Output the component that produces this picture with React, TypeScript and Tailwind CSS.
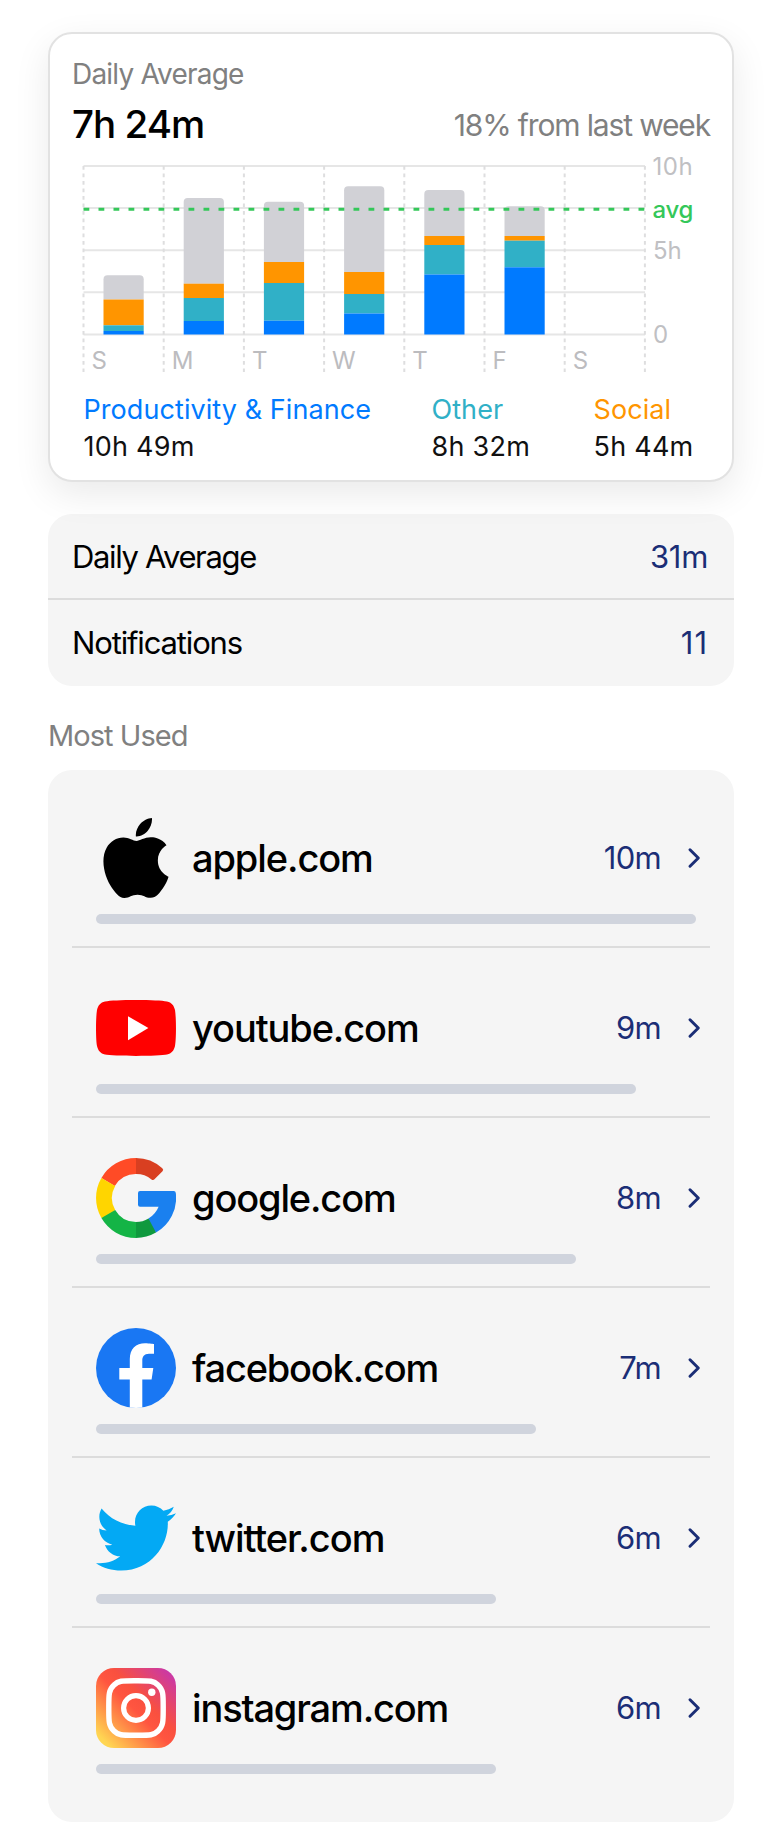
import React from "react";
import { SiApple } from "react-icons/si";

type Day = { label: string; top: number; social: number; other: number; work: number };

const BASE = 334.5;
const LEFT = 83.5;
const STEP = 80.2;

const days: Day[] = [
  { label: "S", top: 275.3, social: 299.5, other: 325.3, work: 331 },
  { label: "M", top: 198, social: 283.7, other: 298, work: 321 },
  { label: "T", top: 201.7, social: 262, other: 283, work: 320.7 },
  { label: "W", top: 186.3, social: 272, other: 294, work: 313.5 },
  { label: "T", top: 190, social: 236, other: 245, work: 274.5 },
  { label: "F", top: 206.3, social: 236, other: 240.7, work: 267.3 },
  { label: "S", top: BASE, social: BASE, other: BASE, work: BASE },
];

function UsageChart() {
  return (
    <svg className="block h-[224px] w-[638px] overflow-visible" viewBox="72 154 638 224" fontFamily="Inter, sans-serif" fontSize="24">
      {[166, 208, 250.2, 292.3, 334.5].map((y) => (
        <line key={y} x1={LEFT} x2={645} y1={y} y2={y} stroke="#e6e6e6" strokeWidth="2" />
      ))}
      {Array.from({ length: 8 }, (_, i) => (
        <line key={i} x1={LEFT + STEP * i} x2={LEFT + STEP * i} y1="166" y2="372" stroke="#dededf" strokeWidth="2" strokeDasharray="3.7 3.8" />
      ))}
      {days.map((d, i) => {
        const x = LEFT + STEP * i + 20;
        if (d.top >= BASE) return null;
        return (
          <g key={i}>
            <path d={`M${x} ${d.social}V${d.top + 4}q0 -4 4 -4h32.2q4 0 4 4V${d.social}z`} fill="#d1d1d6" />
            <rect x={x} y={d.social} width="40.2" height={d.other - d.social} fill="#ff9500" />
            <rect x={x} y={d.other} width="40.2" height={d.work - d.other} fill="#30b0c7" />
            <rect x={x} y={d.work} width="40.2" height={BASE - d.work} fill="#007aff" />
          </g>
        );
      })}
      <line x1={LEFT} x2="645" y1="209.3" y2="209.3" stroke="#34c759" strokeWidth="3" strokeDasharray="5.8 9.2" />
      {days.map((d, i) => (
        <text key={i} x={LEFT + STEP * i + 8} y="368.5" fill="#bcbcbf">{d.label}</text>
      ))}
      <text x="652.5" y="174.8" letterSpacing="0.5" fill="#c0c0c3">10h</text>
      <text x="652.5" y="218" fontWeight="500" letterSpacing="-0.3" fill="#34c759">avg</text>
      <text x="653" y="258.8" fill="#c0c0c3">5h</text>
      <text x="653" y="343" fill="#c0c0c3">0</text>
    </svg>
  );
}

function YouTube() {
  return (
    <svg className="size-20" viewBox="0 0 80 80">
      <path d="M40 12C55 12 66 12.5 71 13.5C75.500 14.500 78 17.500 79 22C80.300 30 80.300 50 79 58C78 62.500 75.500 65.500 71 66.600C64 68.400 16 68.400 9 66.600C4.500 65.500 2 62.500 1 58C-.3 50 -.3 30 1 22C2 17.500 4.500 14.500 9 13.500C14 12.500 25 12 40 12Z" fill="#f00" />
      <path d="M32 28.200L52.400 40L32 52.200Z" fill="#fff" />
    </svg>
  );
}

function Google() {
  return (
    <svg className="size-20" viewBox="0 0 80 80">
      <path d="M40 0A40 40 0 0 0 5.400 20L18.800 28A24 24 0 0 1 40 16L43 8Z" fill="#ff4b26" />
      <path d="M40 0V16A24 24 0 0 1 55.500 21.400Q57.300 22.700 58.700 21L66.500 13.300Q68 11.700 66.300 10.200A40 40 0 0 0 40 0Z" fill="#d93f21" />
      <path d="M5.400 20A40 40 0 0 0 5.400 60L13 58L19.200 52A24 24 0 0 1 19.200 28Z" fill="#ffd500" />
      <path d="M5.400 60A40 40 0 0 0 40 80L43 72L40 64A24 24 0 0 1 19.200 52Z" fill="#14b446" />
      <path d="M40 64V80A40 40 0 0 0 60 74.600L59 67L52.500 60.500A24 24 0 0 1 40 64Z" fill="#0f993e" />
      <path d="M44 33H77.800Q79.600 33 79.800 35A40 40 0 0 1 60 74.600L52.500 60.500A24 24 0 0 0 62.600 48.800H44Q42 48.800 42 46.800V35Q42 33 44 33Z" fill="#1a80ef" />
    </svg>
  );
}

function Facebook() {
  return (
    <svg className="size-20" viewBox="0 0 80 80">
      <circle cx="40" cy="40" r="40" fill="#1977f3" />
      <path d="M33.800 79.500V51.500H23.300V40H33.800V31C33.800 20.600 40 15.200 49 15.200C53.500 15.200 58 16 58 16V25.800H53C48 25.800 46.300 29 46.300 32.400V40H57.300L55.600 51.500H46.300V79.500Q40 80.300 33.800 79.500Z" fill="#fff" />
    </svg>
  );
}

function Twitter() {
  return (
    <svg className="size-20" viewBox="0 0 512 512">
      <path fill="#03a9f4" d="M512 97.248c-19.04 8.352-39.328 13.888-60.48 16.576 21.76-12.992 38.368-33.408 46.176-58.016-20.288 12.096-42.688 20.64-66.56 25.408C411.872 60.704 384.416 48 354.464 48c-58.112 0-104.896 47.168-104.896 104.992 0 8.320.704 16.320 2.432 23.936-87.264-4.256-164.480-46.080-216.352-109.792-9.056 15.712-14.368 33.696-14.368 53.056 0 36.352 18.720 68.576 46.624 87.232-16.864-.32-33.408-5.216-47.424-12.928v1.152c0 51.008 36.384 93.376 84.096 103.136-8.544 2.336-17.856 3.456-27.520 3.456-6.720 0-13.504-.384-19.872-1.792 13.600 41.568 52.192 72.128 98.080 73.120-35.712 27.936-81.056 44.768-130.144 44.768-8.608 0-16.864-.384-25.120-1.440C46.496 446.880 101.600 464 161.024 464c193.152 0 298.752-160 298.752-298.688 0-4.640-.16-9.120-.384-13.568 20.832-14.784 38.336-33.248 52.608-54.496z" />
    </svg>
  );
}

function Instagram() {
  return (
    <svg className="size-20" viewBox="0 0 80 80">
      <defs>
        <linearGradient id="ig" x1="0" y1="80" x2="80" y2="0" gradientUnits="userSpaceOnUse">
          <stop offset="0" stopColor="#ffdd55" />
          <stop offset="0.1" stopColor="#ffd452" />
          <stop offset="0.48" stopColor="#ff5540" />
          <stop offset="0.6" stopColor="#f9503f" />
          <stop offset="0.95" stopColor="#c837ab" />
        </linearGradient>
      </defs>
      <rect width="80" height="80" rx="18" fill="url(#ig)" />
      <path d="M40 12.700C54 12.700 57.500 12.500 62 17C67.500 22 67.200 27 67.200 40C67.200 53 67.500 58 62 63C57.500 67.500 54 67.300 40 67.300C26 67.300 22.500 67.500 18 63C12.500 58 12.800 53 12.800 40C12.800 27 12.500 22 18 17C22.500 12.500 26 12.700 40 12.700Z" fill="none" stroke="#fff" strokeWidth="5.400" />
      <circle cx="40" cy="40" r="12.400" fill="none" stroke="#fff" strokeWidth="5.200" />
      <circle cx="55.800" cy="24.200" r="3.700" fill="#fff" />
    </svg>
  );
}

const sites = [
  { name: "apple.com", time: "10m", width: 600, track: "tracking-[-1.1px]", icon: <SiApple className="size-20 text-black" /> },
  { name: "youtube.com", time: "9m", width: 540, track: "tracking-[-1.1px]", icon: <YouTube /> },
  { name: "google.com", time: "8m", width: 480, track: "tracking-[-1.15px]", icon: <Google /> },
  { name: "facebook.com", time: "7m", width: 440, track: "tracking-[-1.2px]", icon: <Facebook /> },
  { name: "twitter.com", time: "6m", width: 400, track: "tracking-[-1.05px]", icon: <Twitter /> },
  { name: "instagram.com", time: "6m", width: 400, track: "tracking-[-1.15px]", icon: <Instagram /> },
];

const legend = [
  { name: "Productivity & Finance", time: "10h 49m", color: "text-[#007aff]", col: "w-[348px]" },
  { name: "Other", time: "8h 32m", color: "text-[#30b0c7]", col: "w-[162px]" },
  { name: "Social", time: "5h 44m", color: "text-[#ff9500]", col: "w-[110px]" },
];

export default function App() {
  return (
    <main className="flex h-[1822px] w-[782px] flex-col bg-white px-12 pt-8 font-['Inter',sans-serif] text-black">
      <section className="relative z-10 flex h-[450px] shrink-0 flex-col rounded-[24px] border-2 border-[#e2e2e2] bg-white px-[22px] pt-[22px] shadow-[0_12px_36px_rgba(0,0,0,0.085)]">
        <h2 className="h-9 text-[28px] leading-9 tracking-[-0.8px] text-[#808080]">Daily Average</h2>
        <div className="flex h-[62px] items-start justify-between">
          <p className="pt-[8px] text-[38.5px] font-medium leading-[48px] tracking-[-0.95px]">7h 24m</p>
          <p className="pt-[11px] text-[30px] leading-[44px] tracking-[-1.15px] text-[#808080]">18% from last week</p>
        </div>
        <UsageChart />
        <div className="flex pl-[11.5px] pt-[13px]">
          {legend.map((l) => (
            <div key={l.name} className={`${l.col} whitespace-nowrap text-[27px] leading-[37px]`}>
              <p className={`${l.color} tracking-[0.07px]`}>{l.name}</p>
              <p className="tracking-[0.25px] text-[#111]">{l.time}</p>
            </div>
          ))}
        </div>
      </section>

      <section className="mt-8 shrink-0 rounded-[24px] bg-[#f5f5f5] text-[31px] leading-[86px] tracking-[-1.35px]">
        <div className="flex h-[86px] justify-between border-b-2 border-[#dcdcdc] px-6">
          <span>Daily Average</span>
          <span className="mr-[2px] tracking-[-0.3px] text-[#1b2e76]">31m</span>
        </div>
        <div className="flex h-[86px] justify-between px-6 leading-[86px]">
          <span className="tracking-[-1.15px]">Notifications</span>
          <span className="mr-[2px] tracking-[1px] text-[#1b2e76]">11</span>
        </div>
      </section>

      <h3 className="h-[84px] shrink-0 pt-[32px] text-[29px] leading-9 tracking-[-0.95px] text-[#808080]">Most Used</h3>

      <section className="h-[1052px] shrink-0 rounded-[24px] bg-[#f5f5f5] px-6 pt-2">
        {sites.map((s) => (
          <div key={s.name} className="h-[170px] border-b-2 border-[#dcdcdc] px-6 pt-10 last:border-b-0">
            <div className="flex h-20 items-center">
              {s.icon}
              <span className={`ml-4 text-[38px] font-medium leading-[48px] ${s.track}`}>{s.name}</span>
              <span className="ml-auto text-[31px] leading-10 tracking-[-0.7px] text-[#1b2e76]">{s.time}</span>
              <svg className="-mr-[16px] ml-[25px] h-6 w-[16px]" viewBox="0 0 16 24" fill="none" stroke="#1b2e76" strokeWidth="3" strokeLinecap="round" strokeLinejoin="round">
                <path d="M4 3.800L12.300 12L4 20.200" />
              </svg>
            </div>
            <div className="mt-4 h-2.5 rounded-full bg-[#d0d4dd]" style={{ width: s.width }} />
          </div>
        ))}
      </section>
    </main>
  );
}
